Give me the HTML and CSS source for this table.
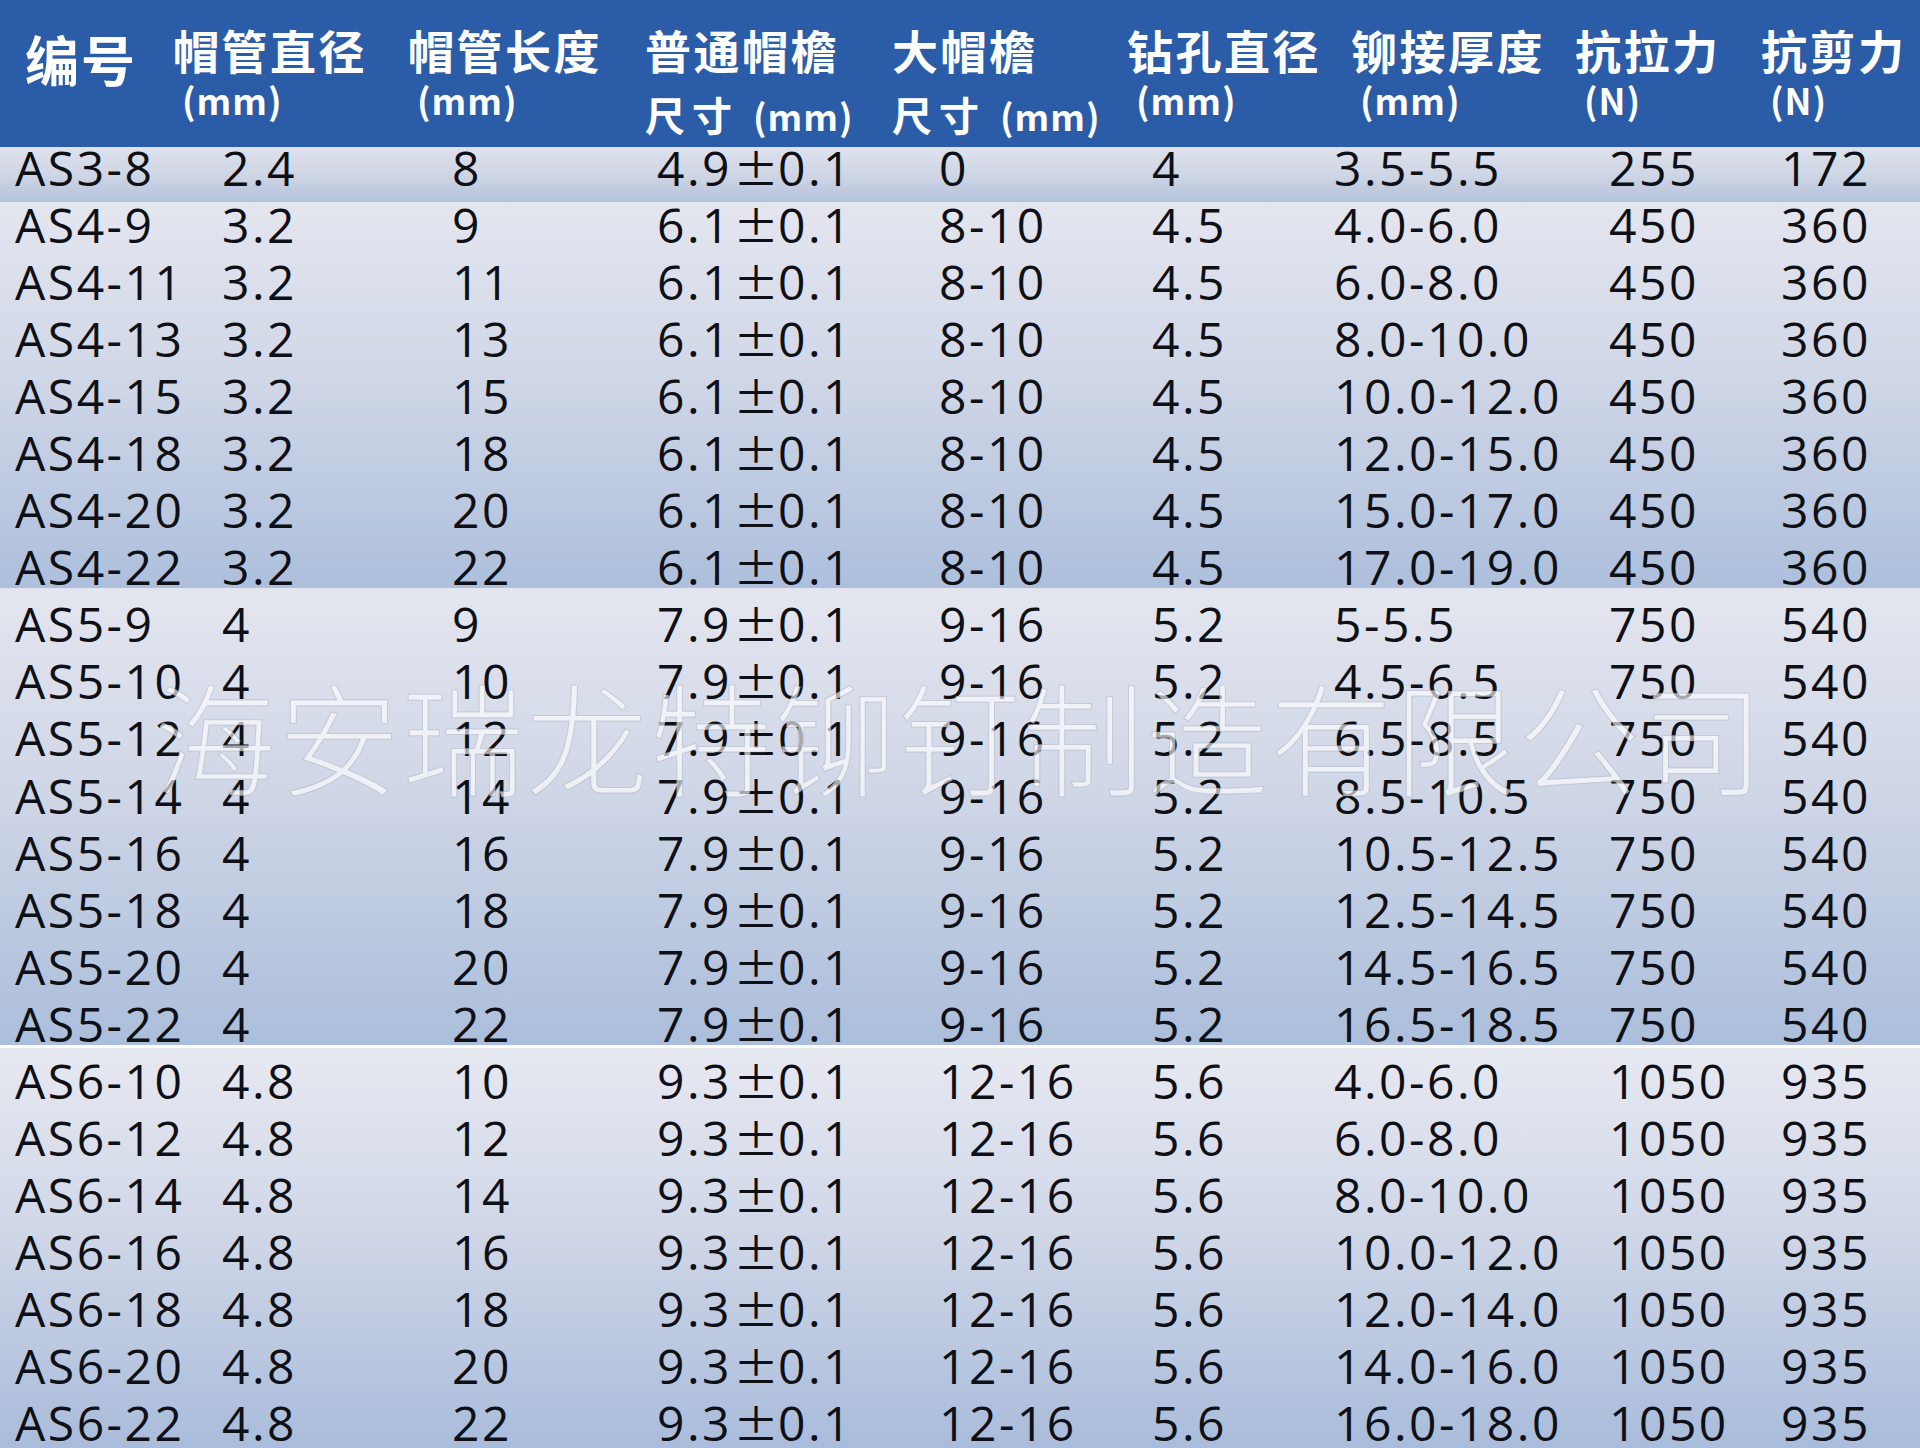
FILE: index.html
```html
<!DOCTYPE html>
<html lang="zh-CN">
<head>
<meta charset="utf-8">
<title>铆钉规格表</title>
<link rel="stylesheet" href="styles.css">
</head>
<body>
<div class="sheet">
  <div class="thead">
    <div class="th"><div class="big">编号</div></div>
    <div class="th"><div class="l1">帽管直径</div><div class="l2">(mm)</div></div>
    <div class="th"><div class="l1">帽管长度</div><div class="l2">(mm)</div></div>
    <div class="th"><div class="l1">普通帽檐</div><div class="l2b"><span class="cj">尺寸</span><span class="u">(mm)</span></div></div>
    <div class="th"><div class="l1">大帽檐</div><div class="l2b"><span class="cj">尺寸</span><span class="u">(mm)</span></div></div>
    <div class="th"><div class="l1">钻孔直径</div><div class="l2">(mm)</div></div>
    <div class="th"><div class="l1">铆接厚度</div><div class="l2">(mm)</div></div>
    <div class="th"><div class="l1">抗拉力</div><div class="l2">(N)</div></div>
    <div class="th"><div class="l1">抗剪力</div><div class="l2">(N)</div></div>
  </div>
  <div class="tbody">
    <div class="row"><span>AS3-8</span><span>2.4</span><span>8</span><span>4.9<i class="pm">±</i>0.1</span><span>0</span><span>4</span><span>3.5-5.5</span><span>255</span><span>172</span></div>
    <div class="row"><span>AS4-9</span><span>3.2</span><span>9</span><span>6.1<i class="pm">±</i>0.1</span><span>8-10</span><span>4.5</span><span>4.0-6.0</span><span>450</span><span>360</span></div>
    <div class="row"><span>AS4-11</span><span>3.2</span><span>11</span><span>6.1<i class="pm">±</i>0.1</span><span>8-10</span><span>4.5</span><span>6.0-8.0</span><span>450</span><span>360</span></div>
    <div class="row"><span>AS4-13</span><span>3.2</span><span>13</span><span>6.1<i class="pm">±</i>0.1</span><span>8-10</span><span>4.5</span><span>8.0-10.0</span><span>450</span><span>360</span></div>
    <div class="row"><span>AS4-15</span><span>3.2</span><span>15</span><span>6.1<i class="pm">±</i>0.1</span><span>8-10</span><span>4.5</span><span>10.0-12.0</span><span>450</span><span>360</span></div>
    <div class="row"><span>AS4-18</span><span>3.2</span><span>18</span><span>6.1<i class="pm">±</i>0.1</span><span>8-10</span><span>4.5</span><span>12.0-15.0</span><span>450</span><span>360</span></div>
    <div class="row"><span>AS4-20</span><span>3.2</span><span>20</span><span>6.1<i class="pm">±</i>0.1</span><span>8-10</span><span>4.5</span><span>15.0-17.0</span><span>450</span><span>360</span></div>
    <div class="row"><span>AS4-22</span><span>3.2</span><span>22</span><span>6.1<i class="pm">±</i>0.1</span><span>8-10</span><span>4.5</span><span>17.0-19.0</span><span>450</span><span>360</span></div>
    <div class="row"><span>AS5-9</span><span>4</span><span>9</span><span>7.9<i class="pm">±</i>0.1</span><span>9-16</span><span>5.2</span><span>5-5.5</span><span>750</span><span>540</span></div>
    <div class="row"><span>AS5-10</span><span>4</span><span>10</span><span>7.9<i class="pm">±</i>0.1</span><span>9-16</span><span>5.2</span><span>4.5-6.5</span><span>750</span><span>540</span></div>
    <div class="row"><span>AS5-12</span><span>4</span><span>12</span><span>7.9<i class="pm">±</i>0.1</span><span>9-16</span><span>5.2</span><span>6.5-8.5</span><span>750</span><span>540</span></div>
    <div class="row"><span>AS5-14</span><span>4</span><span>14</span><span>7.9<i class="pm">±</i>0.1</span><span>9-16</span><span>5.2</span><span>8.5-10.5</span><span>750</span><span>540</span></div>
    <div class="row"><span>AS5-16</span><span>4</span><span>16</span><span>7.9<i class="pm">±</i>0.1</span><span>9-16</span><span>5.2</span><span>10.5-12.5</span><span>750</span><span>540</span></div>
    <div class="row"><span>AS5-18</span><span>4</span><span>18</span><span>7.9<i class="pm">±</i>0.1</span><span>9-16</span><span>5.2</span><span>12.5-14.5</span><span>750</span><span>540</span></div>
    <div class="row"><span>AS5-20</span><span>4</span><span>20</span><span>7.9<i class="pm">±</i>0.1</span><span>9-16</span><span>5.2</span><span>14.5-16.5</span><span>750</span><span>540</span></div>
    <div class="row"><span>AS5-22</span><span>4</span><span>22</span><span>7.9<i class="pm">±</i>0.1</span><span>9-16</span><span>5.2</span><span>16.5-18.5</span><span>750</span><span>540</span></div>
    <div class="row"><span>AS6-10</span><span>4.8</span><span>10</span><span>9.3<i class="pm">±</i>0.1</span><span>12-16</span><span>5.6</span><span>4.0-6.0</span><span>1050</span><span>935</span></div>
    <div class="row"><span>AS6-12</span><span>4.8</span><span>12</span><span>9.3<i class="pm">±</i>0.1</span><span>12-16</span><span>5.6</span><span>6.0-8.0</span><span>1050</span><span>935</span></div>
    <div class="row"><span>AS6-14</span><span>4.8</span><span>14</span><span>9.3<i class="pm">±</i>0.1</span><span>12-16</span><span>5.6</span><span>8.0-10.0</span><span>1050</span><span>935</span></div>
    <div class="row"><span>AS6-16</span><span>4.8</span><span>16</span><span>9.3<i class="pm">±</i>0.1</span><span>12-16</span><span>5.6</span><span>10.0-12.0</span><span>1050</span><span>935</span></div>
    <div class="row"><span>AS6-18</span><span>4.8</span><span>18</span><span>9.3<i class="pm">±</i>0.1</span><span>12-16</span><span>5.6</span><span>12.0-14.0</span><span>1050</span><span>935</span></div>
    <div class="row"><span>AS6-20</span><span>4.8</span><span>20</span><span>9.3<i class="pm">±</i>0.1</span><span>12-16</span><span>5.6</span><span>14.0-16.0</span><span>1050</span><span>935</span></div>
    <div class="row"><span>AS6-22</span><span>4.8</span><span>22</span><span>9.3<i class="pm">±</i>0.1</span><span>12-16</span><span>5.6</span><span>16.0-18.0</span><span>1050</span><span>935</span></div>
  </div>
  <div class="watermark">海安瑞龙特铆钉制造有限公司</div>
</div>
</body>
</html>
```
FILE: styles.css
```css
html, body {
  margin: 0;
  padding: 0;
  background: #ffffff;
}

.sheet {
  position: relative;
  width: 1920px;
  height: 1448px;
  overflow: hidden;
}

.thead {
  display: grid;
  grid-template-columns: 148px 235px 237px 247px 235px 224px 224px 186px 1fr;
  box-sizing: border-box;
  height: 147px;
  padding: 27px 0 0 25px;
  background: #2b5ca8;
  color: #ffffff;
  font-family: "Noto Sans CJK SC", "Noto Sans", sans-serif;
  font-weight: 700;
}

.th {
  display: flex;
  flex-direction: column;
  align-items: flex-start;
}

.big {
  margin-top: 5px;
  font-size: 54px;
  line-height: 54px;
  letter-spacing: 2px;
}

.l1 {
  font-size: 46px;
  line-height: 45px;
  letter-spacing: 2.5px;
  white-space: nowrap;
}

.l2 {
  margin-top: 9px;
  padding-left: 9px;
  font-size: 36px;
  line-height: 36px;
  letter-spacing: 1px;
  white-space: nowrap;
}

.l2b {
  margin-top: 22px;
  font-size: 40px;
  line-height: 40px;
  white-space: nowrap;
}

.l2b .cj {
  letter-spacing: 7px;
}

.l2b .u {
  margin-left: 14px;
  font-size: 36px;
  letter-spacing: 1px;
}

.tbody {
  background:
    linear-gradient(#dfe2ec, #cdd4e4 55%, #b3c2dc) 0 0 / 100% 55px no-repeat,
    linear-gradient(#e4e6ef, #d0d7e7 45%, #adbfdc) 0 55px / 100% 386px no-repeat,
    linear-gradient(#e4e6ef, #cfd6e6 45%, #abbedb) 0 441px / 100% 457px no-repeat,
    linear-gradient(#e7e9f1, #d0d7e7 45%, #a9bcdb) 0 901px / 100% 400px no-repeat,
    #ffffff;
  color: #0e1016;
  font-family: "Open Sans", "Liberation Sans", sans-serif;
  font-size: 48px;
  letter-spacing: 2.5px;
}

.row {
  display: grid;
  grid-template-columns: 207px 230px 205px 282px 213px 182px 275px 172px 1fr;
  padding-left: 15px;
  height: 57.06px;
  line-height: 42px;
  white-space: nowrap;
}

.pm {
  display: inline-block;
  width: 46px;
  line-height: 20px;
  text-align: center;
  font-style: normal;
  font-family: "Noto Sans CJK SC", sans-serif;
  letter-spacing: 0;
  transform: scale(0.95, 0.9);
  transform-origin: 50% 31px;
}

.watermark {
  position: absolute;
  left: 154px;
  top: 673px;
  font-family: "Noto Sans CJK SC", sans-serif;
  font-weight: 300;
  font-size: 122px;
  line-height: 122px;
  letter-spacing: 2px;
  white-space: nowrap;
  color: rgba(255, 255, 255, 0.64);
  -webkit-text-stroke: 1px rgba(140, 150, 170, 0.35);
  pointer-events: none;
}
```
